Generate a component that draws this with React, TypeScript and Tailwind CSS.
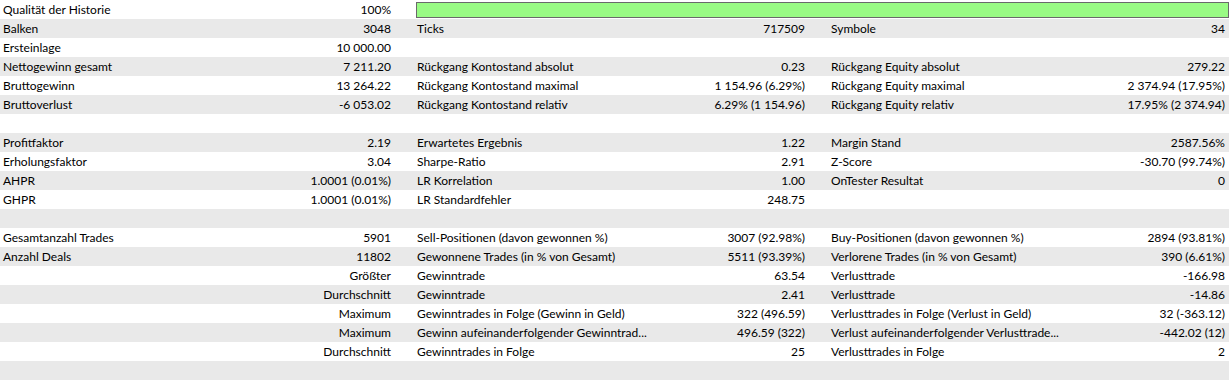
type Cell = [string, string] | null;

interface Row {
  cells: [Cell, Cell, Cell];
  bar?: boolean;
}

const rows: Row[] = [
  { cells: [['Qualität der Historie', '100%'], null, null], bar: true },
  { cells: [['Balken', '3048'], ['Ticks', '717509'], ['Symbole', '34']] },
  { cells: [['Ersteinlage', '10 000.00'], null, null] },
  { cells: [['Nettogewinn gesamt', '7 211.20'], ['Rückgang Kontostand absolut', '0.23'], ['Rückgang Equity absolut', '279.22']] },
  { cells: [['Bruttogewinn', '13 264.22'], ['Rückgang Kontostand maximal', '1 154.96 (6.29%)'], ['Rückgang Equity maximal', '2 374.94 (17.95%)']] },
  { cells: [['Bruttoverlust', '-6 053.02'], ['Rückgang Kontostand relativ', '6.29% (1 154.96)'], ['Rückgang Equity relativ', '17.95% (2 374.94)']] },
  { cells: [null, null, null] },
  { cells: [['Profitfaktor', '2.19'], ['Erwartetes Ergebnis', '1.22'], ['Margin Stand', '2587.56%']] },
  { cells: [['Erholungsfaktor', '3.04'], ['Sharpe-Ratio', '2.91'], ['Z-Score', '-30.70 (99.74%)']] },
  { cells: [['AHPR', '1.0001 (0.01%)'], ['LR Korrelation', '1.00'], ['OnTester Resultat', '0']] },
  { cells: [['GHPR', '1.0001 (0.01%)'], ['LR Standardfehler', '248.75'], null] },
  { cells: [null, null, null] },
  { cells: [['Gesamtanzahl Trades', '5901'], ['Sell-Positionen (davon gewonnen %)', '3007 (92.98%)'], ['Buy-Positionen (davon gewonnen %)', '2894 (93.81%)']] },
  { cells: [['Anzahl Deals', '11802'], ['Gewonnene Trades (in % von Gesamt)', '5511 (93.39%)'], ['Verlorene Trades (in % von Gesamt)', '390 (6.61%)']] },
  { cells: [['', 'Größter'], ['Gewinntrade', '63.54'], ['Verlusttrade', '-166.98']] },
  { cells: [['', 'Durchschnitt'], ['Gewinntrade', '2.41'], ['Verlusttrade', '-14.86']] },
  { cells: [['', 'Maximum'], ['Gewinntrades in Folge (Gewinn in Geld)', '322 (496.59)'], ['Verlusttrades in Folge (Verlust in Geld)', '32 (-363.12)']] },
  { cells: [['', 'Maximum'], ['Gewinn aufeinanderfolgender Gewinntrad...', '496.59 (322)'], ['Verlust aufeinanderfolgender Verlusttrade...', '-442.02 (12)']] },
  { cells: [['', 'Durchschnitt'], ['Gewinntrades in Folge', '25'], ['Verlusttrades in Folge', '2']] },
  { cells: [null, null, null] },
];

function StatCell({ cell, last }: { cell: Cell; last?: boolean }) {
  return (
    <div className={last ? 'flex items-center justify-between pl-[3px] pr-[4px]' : 'flex items-center justify-between pl-[3px] pr-[23px]'}>
      <span className="whitespace-nowrap">{cell ? cell[0] : ''}</span>
      <span className="whitespace-nowrap">{cell ? cell[1] : ''}</span>
    </div>
  );
}

export default function App() {
  return (
    <div
      className="w-[1231px] h-[380px] bg-white text-black text-[12px] leading-[19px]"
      style={{ fontFamily: 'Lato, "Noto Sans", sans-serif' }}
    >
      <div className="w-[1229px]">
        {rows.map((row, i) => (
          <div
            key={i}
            className={i % 2 === 1 ? 'grid grid-cols-[414px_414px_401px] h-[19px] bg-[#e9e9e9]' : 'grid grid-cols-[414px_414px_401px] h-[19px] bg-white'}
          >
            <StatCell cell={row.cells[0]} />
            {row.bar ? (
              <div className="col-span-2 flex items-center pl-[2px]">
                <div className="h-[16px] w-full border border-[#6a6a6a] bg-[#99fb84]" />
              </div>
            ) : (
              <>
                <StatCell cell={row.cells[1]} />
                <StatCell cell={row.cells[2]} last />
              </>
            )}
          </div>
        ))}
      </div>
    </div>
  );
}
